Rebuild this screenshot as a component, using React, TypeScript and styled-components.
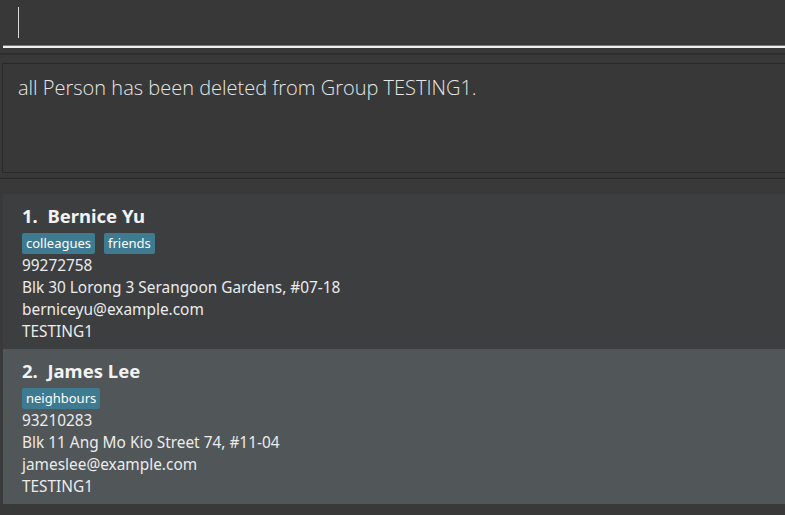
import React from "react";
import styled, { createGlobalStyle } from "styled-components";

const Global = createGlobalStyle`
  html, body { margin: 0; padding: 0; background: #383838; overflow: hidden; }
  body { font-family: "Noto Sans", "Open Sans", sans-serif; }
`;

const Page = styled.div`
  width: 785px;
  height: 515px;
  display: flex;
  flex-direction: column;
  background: #383838;
  overflow: hidden;
`;

const CommandPane = styled.div`
  height: 55px;
  box-sizing: border-box;
  padding: 0 0 5px 3px;
  display: flex;
  flex-direction: column;
  justify-content: flex-end;
  background: #383838;
  border-bottom: 2px solid #2e2e2e;
`;

const CommandField = styled.div`
  height: 48px;
  box-sizing: border-box;
  border-bottom: 2px solid #f0f0f0;
  box-shadow: 0 -1px 0 #777 inset;
  padding: 7px 0 0 15px;
`;

const Caret = styled.div`
  width: 1px;
  height: 31px;
  background: #d8d8d8;
`;

const ResultPane = styled.div`
  height: 124px;
  box-sizing: border-box;
  padding: 8px 0 0 2px;
  background: #383838;
  border-bottom: 1px solid #2a2a2a;
`;

const ResultBox = styled.div`
  width: 800px;
  height: 110px;
  box-sizing: border-box;
  border: 1px solid #2a2a2a;
  background: #383838;
  padding: 10px 0 0 15px;
  font-family: "Open Sans", "Noto Sans", sans-serif;
  font-weight: 300;
  font-size: 20px;
  line-height: 28px;
  color: #e6e6e6;
`;

const ListPane = styled.div`
  flex: 1;
  padding: 15px 0 0 3px;
  background: #393939;
  display: flex;
  flex-direction: column;
`;

const Card = styled.div<{ $alt?: boolean }>`
  height: 155px;
  box-sizing: border-box;
  background: ${(p) => (p.$alt ? "#515658" : "#3c3e40")};
  padding: 9px 0 0 19px;
  color: #ececec;
  display: flex;
  flex-direction: column;
`;

const Name = styled.div`
  font-weight: 700;
  font-size: 18.5px;
  line-height: 26px;
  color: #f2f2f2;
  white-space: pre;
`;

const Tags = styled.div`
  display: flex;
  gap: 9px;
  margin: 4px 0 0 0;
  height: 22px;
`;

const Tag = styled.span`
  background: #3e7b91;
  color: #ffffff;
  font-size: 13px;
  height: 21px;
  line-height: 21px;
  padding: 0 4px;
  border-radius: 2px;
`;

const Line = styled.div`
  font-size: 15.4px;
  line-height: 22px;
  color: #ececec;
`;

type Person = {
  idx: number;
  name: string;
  tags: string[];
  phone: string;
  address: string;
  email: string;
  group: string;
};

const people: Person[] = [
  {
    idx: 1,
    name: "Bernice Yu",
    tags: ["colleagues", "friends"],
    phone: "99272758",
    address: "Blk 30 Lorong 3 Serangoon Gardens, #07-18",
    email: "berniceyu@example.com",
    group: "TESTING1",
  },
  {
    idx: 2,
    name: "James Lee",
    tags: ["neighbours"],
    phone: "93210283",
    address: "Blk 11 Ang Mo Kio Street 74, #11-04",
    email: "jameslee@example.com",
    group: "TESTING1",
  },
];

export default function App() {
  return (
    <Page>
      <Global />
      <CommandPane>
        <CommandField>
          <Caret />
        </CommandField>
      </CommandPane>
      <ResultPane>
        <ResultBox>all Person has been deleted from Group TESTING1.</ResultBox>
      </ResultPane>
      <ListPane>
        {people.map((p, i) => (
          <Card key={p.idx} $alt={i % 2 === 1}>
            <Name>{`${p.idx}.  ${p.name}`}</Name>
            <Tags>
              {p.tags.map((t) => (
                <Tag key={t}>{t}</Tag>
              ))}
            </Tags>
            <Line>{p.phone}</Line>
            <Line>{p.address}</Line>
            <Line>{p.email}</Line>
            <Line>{p.group}</Line>
          </Card>
        ))}
      </ListPane>
    </Page>
  );
}
